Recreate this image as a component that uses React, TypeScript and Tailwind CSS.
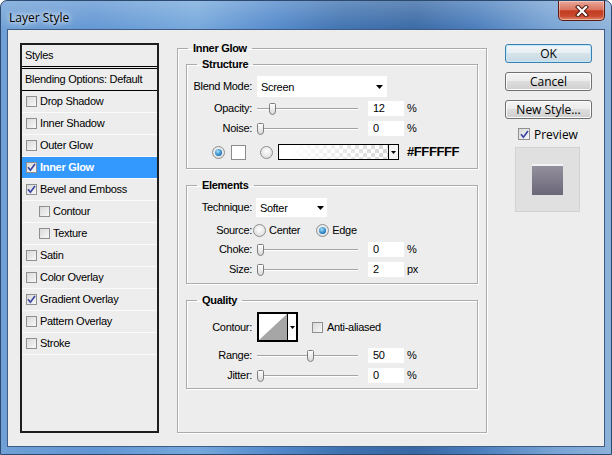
import React from "react";

type P = { className?: string; children?: React.ReactNode };

const Check = ({ checked, size = 11 }: { checked?: boolean; size?: number }) => (
  <span
    className={
      "flex shrink-0 items-center justify-center border border-[#8f8f8f] bg-[linear-gradient(135deg,#d9d9d9,#f8f8f8)] " +
      (size === 12 ? "h-[12px] w-[12px]" : "h-[11px] w-[11px]")
    }
  >
    {checked && (
      <svg width="9" height="9" viewBox="0 0 9 9">
        <path d="M1 4.3 L3.4 7.2 L8 1" fill="none" stroke="#3b46a3" strokeWidth="1.7" />
      </svg>
    )}
  </span>
);

const Radio = ({ checked, className = "" }: { checked?: boolean; className?: string }) => (
  <span
    className={
      "flex h-[13px] w-[13px] shrink-0 items-center justify-center rounded-full border border-[#8e8f8f] bg-[radial-gradient(circle_at_50%_40%,#ffffff,#d4d4d4)] " +
      className
    }
  >
    {checked && (
      <span className="h-[7px] w-[7px] rounded-full bg-[radial-gradient(circle_at_40%_35%,#a6e0fb,#2a83c4_60%,#175a92)]" />
    )}
  </span>
);

const Label = ({ children }: P) => (
  <span className="w-[65px] shrink-0 text-right leading-[13px]">{children}</span>
);

const Thumb = () => (
  <svg width="7" height="12" viewBox="0 0 7 12" className="shrink-0">
    <defs>
      <linearGradient id="tg" x1="0" y1="0" x2="0" y2="1">
        <stop offset="0" stopColor="#ffffff" />
        <stop offset="1" stopColor="#d9d9d9" />
      </linearGradient>
    </defs>
    <path
      d="M1.5 0.5 H5.5 Q6.5 0.5 6.5 1.5 V8 Q6.5 11.5 3.5 11.5 Q0.5 11.5 0.5 8 V1.5 Q0.5 0.5 1.5 0.5 Z"
      fill="url(#tg)"
      stroke="#7d7d7d"
    />
  </svg>
);

const Slider = ({ left }: { left: number }) => (
  <div className="ml-[5px] flex h-[12px] w-[101px] shrink-0 items-center">
    <div className="h-[2px] shrink-0 bg-[linear-gradient(#a3a3a3_50%,#ffffff_50%)]" style={{ width: left }} />
    <Thumb />
    <div className="h-[2px] flex-1 bg-[linear-gradient(#a3a3a3_50%,#ffffff_50%)]" />
  </div>
);

const Input = ({ children }: P) => (
  <span className="ml-[10px] flex h-[15px] w-[36px] shrink-0 items-center bg-white pl-[5px] leading-[13px]">
    {children}
  </span>
);

const DownTri = ({ w = 7, h = 4 }: { w?: number; h?: number }) => (
  <svg width={w} height={h} viewBox={`0 0 ${w} ${h}`} className="shrink-0">
    <polygon points={`0,0 ${w},0 ${w / 2},${h}`} fill="#000" />
  </svg>
);

const SliderRow = ({ label, left, value, unit, mt }: { label: string; left: number; value: string; unit: string; mt: string }) => (
  <div className={"flex h-[15px] items-center " + mt}>
    <Label>{label}</Label>
    <Slider left={left} />
    <Input>{value}</Input>
    <span className="ml-[3px] leading-[13px]">{unit}</span>
  </div>
);

const Group = ({ title, className = "", children }: P & { title: string }) => (
  <fieldset className={"border border-[#ababab] shadow-[1px_1px_0_#ffffff,inset_1px_1px_0_#ffffff] " + className}>
    <legend className="ml-[10px] px-[5px] font-bold leading-[13px]">{title}</legend>
    {children}
  </fieldset>
);

const Button = ({ children, primary }: P & { primary?: boolean }) => (
  <div
    className={
      "flex h-[19px] w-[87px] items-center justify-center rounded-[3px] border font-['Open_Sans',sans-serif] text-[12px] leading-[15px] tracking-normal " +
      (primary
        ? "border-[#3c7fb1] bg-[linear-gradient(#f1f6f9_0%,#e6eef3_49%,#d5e2ea_50%,#c9d9e4_100%)] shadow-[inset_0_0_0_1px_#bfe9fb]"
        : "border-[#707070] bg-[linear-gradient(#f4f4f4_0%,#ebebeb_49%,#dddddd_50%,#cfcfcf_100%)] shadow-[inset_0_0_0_1px_#fbfbfb]")
    }
  >
    {children}
  </div>
);

const styles: { label: string; checked?: boolean; selected?: boolean; indent?: boolean }[] = [
  { label: "Drop Shadow" },
  { label: "Inner Shadow" },
  { label: "Outer Glow" },
  { label: "Inner Glow", checked: true, selected: true },
  { label: "Bevel and Emboss", checked: true },
  { label: "Contour", indent: true },
  { label: "Texture", indent: true },
  { label: "Satin" },
  { label: "Color Overlay" },
  { label: "Gradient Overlay", checked: true },
  { label: "Pattern Overlay" },
  { label: "Stroke" },
];

export default function App() {
  return (
    <div className="flex h-[455px] w-[612px] flex-col overflow-hidden rounded-t-[7px] border border-[#2c4a70] bg-[linear-gradient(180deg,rgba(255,255,255,0.22)_0%,rgba(255,255,255,0)_30px),linear-gradient(90deg,#6fa0d6_0%,#6296d3_15%,#75a8dc_32%,#5389cb_45%,#3f72b0_56%,#3868a4_68%,#4a7dbc_78%,#76a2d3_90%,#8db2da_100%)] font-['Liberation_Sans',Arial,sans-serif] text-[11px] tracking-[-0.3px] text-black">
      {/* title bar */}
      <div className="flex h-[28px] shrink-0 items-start justify-between">
        <span className="ml-[8px] mt-[9px] font-['Open_Sans',sans-serif] text-[12px] leading-[16px] tracking-normal [text-shadow:0_0_8px_#ffffff,0_0_4px_#ffffff]">
          Layer Style
        </span>
        <div className="mr-[6px] flex h-[20px] w-[47px] items-center justify-center rounded-b-[5px] border border-t-0 border-[#5b1c12] bg-[linear-gradient(#eaa99b_0%,#d9745f_45%,#c43b20_52%,#c84a2f_80%,#e48d6f_100%)] shadow-[inset_0_0_0_1px_rgba(255,255,255,0.35)]">
          <svg width="14" height="12" viewBox="0 0 14 12">
            <path d="M3 2 L11 10 M11 2 L3 10" stroke="#4d1b12" strokeWidth="4.2" strokeLinecap="square" />
            <path d="M3 2 L11 10 M11 2 L3 10" stroke="#ffffff" strokeWidth="2.2" strokeLinecap="square" />
          </svg>
        </div>
      </div>

      {/* client */}
      <div className="mx-[6px] mb-[7px] flex flex-1 border border-[#3f5c84] bg-[#ededed]">
        {/* styles list */}
        <div className="ml-[12px] mt-[13px] flex h-[390px] w-[139px] shrink-0 flex-col border-2 border-[#1e1e1e]">
          <div className="flex h-[21px] items-center pl-[3px] leading-[13px]">Styles</div>
          <div className="h-[3px] border-y border-black" />
          <div className="flex h-[22px] items-center border-b border-black pl-[3px] leading-[13px]">
            Blending Options: Default
          </div>
          {styles.map((s) => (
            <div
              key={s.label}
              className={
                "flex h-[22px] shrink-0 items-center border-b border-[#fafafa] " +
                (s.indent ? "pl-[17px] " : "pl-[4px] ") +
                (s.selected ? "bg-[#3399ff] font-bold text-white" : "")
              }
            >
              <Check checked={s.checked} />
              <span className="ml-[3px] leading-[13px]">{s.label}</span>
            </div>
          ))}
        </div>

        {/* main */}
        <Group title="Inner Glow" className="ml-[18px] mt-[12px] h-[391px] w-[310px] shrink-0">
          <div className="px-[8px]">
            <Group title="Structure" className="mt-[3px]">
              <div className="pb-[8px]">
                <div className="mt-[5px] flex h-[21px] items-center">
                  <Label>Blend Mode:</Label>
                  <div className="ml-[5px] flex h-[21px] w-[130px] items-center justify-between bg-white pl-[4px] pr-[4px]">
                    <span className="mt-[2px] leading-[13px]">Screen</span>
                    <DownTri />
                  </div>
                </div>
                <SliderRow label="Opacity:" left={12} value="12" unit="%" mt="mt-[4px]" />
                <SliderRow label="Noise:" left={0} value="0" unit="%" mt="mt-[5px]" />
                <div className="mt-[8px] flex h-[16px] items-center">
                  <Radio checked className="ml-[25px]" />
                  <span className="ml-[6px] h-[15px] w-[15px] shrink-0 border border-[#8a8a8a] bg-white" />
                  <Radio className="ml-[14px]" />
                  <div className="ml-[5px] flex h-[16px] w-[121px] shrink-0 border border-black">
                    <div className="h-full flex-1 bg-[linear-gradient(90deg,#ffffff_10%,rgba(255,255,255,0)_95%),repeating-conic-gradient(#d9d9d9_0%_25%,#ffffff_0%_50%)] [background-size:100%_100%,8px_8px]" />
                    <div className="flex w-[10px] items-center justify-center border-l border-black bg-[#f4f4f4]">
                      <DownTri w={5} h={3} />
                    </div>
                  </div>
                  <span className="ml-[8px] text-[13px] font-bold leading-[16px] tracking-[-0.4px]">#FFFFFF</span>
                </div>
              </div>
            </Group>

            <Group title="Elements" className="mt-[10px]">
              <div className="pb-[6px]">
                <div className="mt-[6px] flex h-[19px] items-center">
                  <Label>Technique:</Label>
                  <div className="ml-[4px] flex h-[19px] w-[71px] items-center justify-between bg-white pl-[4px] pr-[3px]">
                    <span className="mt-[2px] leading-[13px]">Softer</span>
                    <DownTri />
                  </div>
                </div>
                <div className="mt-[6px] flex h-[14px] items-center">
                  <Label>Source:</Label>
                  <Radio className="ml-[1px]" />
                  <span className="ml-[3px] leading-[13px]">Center</span>
                  <Radio checked className="ml-[16px]" />
                  <span className="ml-[3px] leading-[13px]">Edge</span>
                </div>
                <SliderRow label="Choke:" left={0} value="0" unit="%" mt="mt-[5px]" />
                <SliderRow label="Size:" left={0} value="2" unit="px" mt="mt-[5px]" />
              </div>
            </Group>

            <Group title="Quality" className="mt-[10px]">
              <div className="pb-[5px]">
                <div className="mt-[5px] flex h-[30px] items-center">
                  <Label>Contour:</Label>
                  <div className="ml-[5px] flex h-[30px] w-[41px] shrink-0 border-2 border-black bg-white">
                    <svg width="28" height="26" viewBox="0 0 28 26" className="shrink-0">
                      <polygon points="0,26 28,0 28,26" fill="#a6a6a6" />
                    </svg>
                    <div className="flex flex-1 items-center justify-center border-l border-black">
                      <DownTri w={5} h={3} />
                    </div>
                  </div>
                  <span className="ml-[14px]">
                    <Check />
                  </span>
                  <span className="ml-[4px] leading-[13px]">Anti-aliased</span>
                </div>
                <SliderRow label="Range:" left={50} value="50" unit="%" mt="mt-[6px]" />
                <SliderRow label="Jitter:" left={0} value="0" unit="%" mt="mt-[5px]" />
              </div>
            </Group>
          </div>
        </Group>

        {/* right column */}
        <div className="ml-[18px] mt-[14px] flex w-[87px] shrink-0 flex-col">
          <Button primary>OK</Button>
          <div className="mt-[9px]">
            <Button>Cancel</Button>
          </div>
          <div className="mt-[9px]">
            <Button>New Style...</Button>
          </div>
          <div className="ml-[13px] mt-[9px] flex h-[12px] items-center">
            <Check checked size={12} />
            <span className="ml-[4px] font-['Open_Sans',sans-serif] text-[12px] leading-[15px] tracking-normal">Preview</span>
          </div>
          <div className="ml-[10px] mt-[7px] flex h-[65px] w-[65px] items-center justify-center border border-[#d2d2d2] bg-[#e0e0e0]">
            <div className="h-[31px] w-[31px] bg-[linear-gradient(#9693a0,#6b6678)] shadow-[inset_0_2px_0_#f2f2f2]" />
          </div>
        </div>
      </div>
    </div>
  );
}
